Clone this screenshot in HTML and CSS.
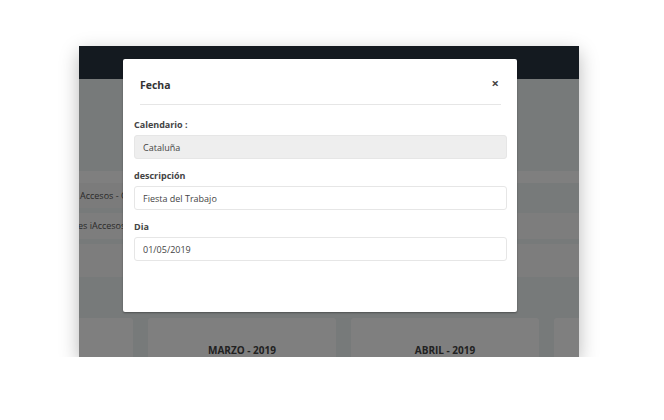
FILE: index.html
```html
<!DOCTYPE html>
<html lang="es">
<head>
    <meta charset="UTF-8">
    <meta name="viewport" content="width=device-width, initial-scale=1.0">
    <title>Fecha</title>
    <link rel="stylesheet" href="styles.css">
</head>
<body>
    <div class="shot">
        <header class="topbar"></header>
        <main class="page">
            <div class="band"></div>
            <div class="crumbs"><span class="crumb">Accesos - Calendario</span></div>
            <div class="row"><span class="row-text">es iAccesos</span></div>
            <div class="box"></div>
            <div class="cards">
                <div class="card"></div>
                <div class="card"><strong>MARZO - 2019</strong></div>
                <div class="card"><strong>ABRIL - 2019</strong></div>
                <div class="card"></div>
            </div>
        </main>
        <div class="backdrop"></div>

        <div class="modal">
            <div class="modal-header">
                <h4>Fecha</h4>
                <button type="button" class="close">&times;</button>
            </div>
            <form class="modal-body">
                <div class="group">
                    <label>Calendario :</label>
                    <input type="text" value="Cataluña" disabled>
                </div>
                <div class="group">
                    <label>descripción</label>
                    <input type="text" value="Fiesta del Trabajo">
                </div>
                <div class="group">
                    <label>Dia</label>
                    <input type="text" value="01/05/2019">
                </div>
            </form>
        </div>
    </div>
</body>
</html>
```

FILE: styles.css
```css
body {
    margin: 0;
    padding: 46px 0 0 79px;
    background-color: #fff;
    font-family: "Open Sans", "DejaVu Sans", sans-serif;
}
.shot {
    position: relative;
    width: 500px;
    height: 311px;
    overflow: hidden;
    box-shadow: 0 6px 18px rgba(0, 0, 0, 0.28);
}
.topbar {
    height: 33px;
    background-color: #283440;
}
.page {
    height: 278px;
    background-color: #eef4f4;
    padding-top: 92px;
    box-sizing: border-box;
}
.band {
    height: 12px;
    background-color: #ffffff;
}
.crumbs {
    height: 25px;
    margin-bottom: 5px;
}
.crumb {
    display: block;
    width: 120px;
    height: 25px;
    line-height: 25px;
    padding-left: 1px;
    background-color: #f6f6f6;
    font-size: 9px;
    color: #555;
    white-space: nowrap;
}
.row {
    height: 26px;
    line-height: 26px;
    background-color: #fafafa;
    margin-bottom: 5px;
    font-size: 9px;
    color: #555;
}
.row-text {
    margin-left: -1px;
}
.box {
    height: 33px;
    background-color: #fafafa;
}
.cards {
    display: flex;
    gap: 15px;
    margin: 41px 0 0 -134px;
}
.card {
    flex: 0 0 188px;
    height: 60px;
    background-color: #fff;
    border-radius: 3px;
    text-align: center;
    padding-top: 26px;
    box-sizing: border-box;
    font-size: 10px;
    line-height: 12px;
}
.card strong {
    color: #444;
}
.backdrop {
    position: absolute;
    inset: 0;
    background-color: rgba(0, 0, 0, 0.5);
}
.modal {
    position: absolute;
    left: 44px;
    top: 13px;
    width: 394px;
    height: 253px;
    background-color: #fff;
    border-radius: 2px;
    box-shadow: 0 1px 2px rgba(0, 0, 0, 0.35);
}
.modal-header {
    display: flex;
    justify-content: space-between;
    align-items: center;
    margin: 0 16px 0 17px;
    padding: 19px 0 12px;
    border-bottom: 1px solid #e6e6e6;
}
.modal-header h4 {
    margin: 0;
    font-size: 10.5px;
    line-height: 14px;
    color: #333;
}
.close {
    border: none;
    background: none;
    padding: 0 2px 0 0;
    margin-top: -4px;
    font-family: "Open Sans", sans-serif;
    font-size: 13px;
    font-weight: bold;
    line-height: 14px;
    color: #444;
    cursor: pointer;
}
.modal-body {
    padding: 14px 10px 0 11px;
}
.group {
    margin-bottom: 11px;
}
.group label {
    display: block;
    margin-bottom: 4px;
    font-size: 9px;
    font-weight: bold;
    line-height: 12px;
    color: #444;
}
.group input {
    display: block;
    width: 100%;
    height: 24px;
    box-sizing: border-box;
    padding: 0 8px;
    border: 1px solid #e6e6e6;
    border-radius: 3px;
    background-color: #fff;
    font-family: "Open Sans", sans-serif;
    font-size: 9px;
    color: #444;
}
.group input:disabled {
    background-color: #eee;
}
```
